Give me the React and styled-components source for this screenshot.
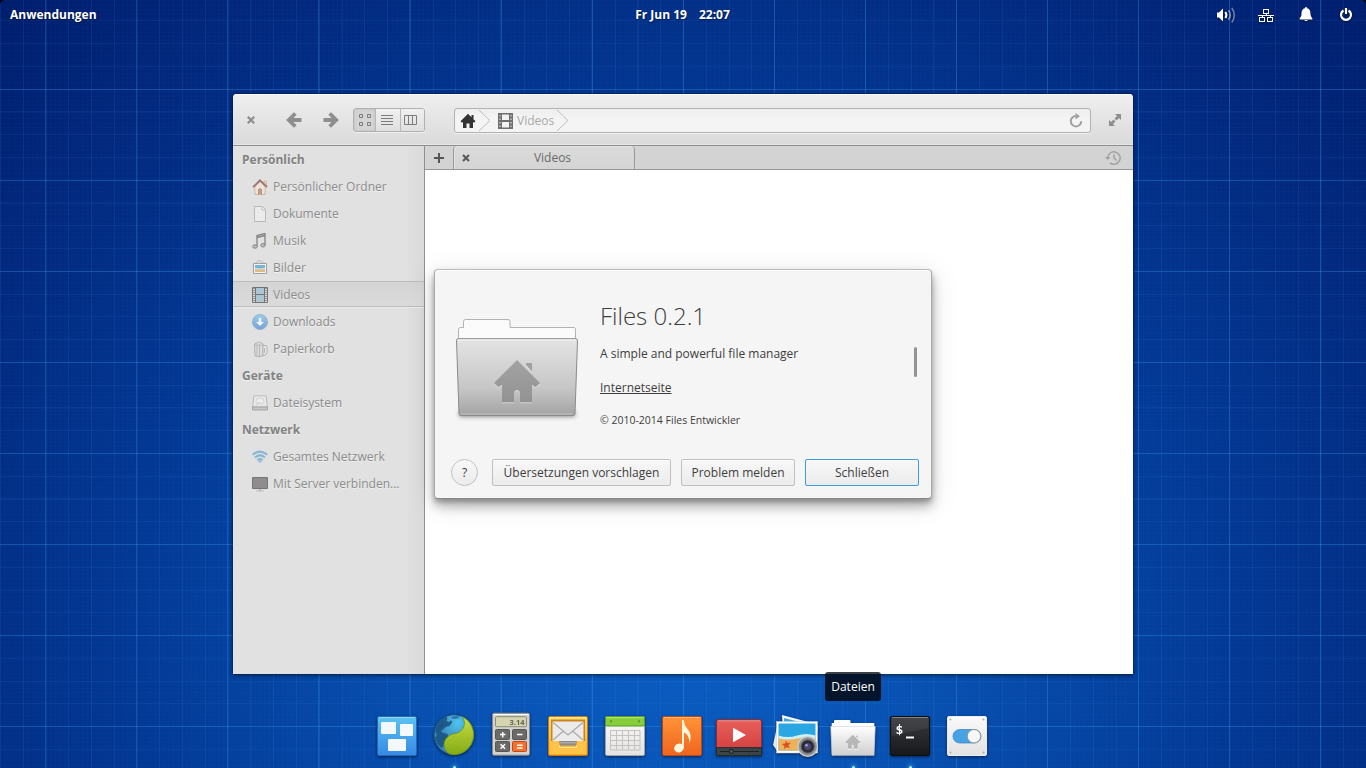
import React from "react";
import styled, { createGlobalStyle, css } from "styled-components";

const GlobalStyle = createGlobalStyle`
  *, *::before, *::after { box-sizing: border-box; }
  body { margin: 0; background: #000; overflow: hidden; }
  svg { display: block; flex: none; }
  button { font: inherit; color: inherit; margin: 0; }
`;

const minor = "rgba(60,150,235,0.1)";
const fine = "rgba(60,150,235,0.025)";
const major = "rgba(60,160,240,0.26)";

const Desktop = styled.main`
  position: relative;
  width: 1366px;
  height: 768px;
  overflow: hidden;
  border-radius: 5px 5px 0 0;
  display: flex;
  flex-direction: column;
  justify-content: space-between;
  font: 12px/18px "Open Sans", "Noto Sans", sans-serif;
  background:
    repeating-linear-gradient(90deg, transparent 0 45px, ${major} 45.3px 46.1px, transparent 46.4px 91.067px),
    repeating-linear-gradient(180deg, transparent 0 88.8px, ${major} 89px 89.8px, transparent 90px 91.067px),
    repeating-linear-gradient(90deg, ${minor} 0 1px, transparent 1.1px 22.767px),
    repeating-linear-gradient(180deg, transparent 0 20.3px, ${minor} 20.4px 21.4px, transparent 21.5px 22.767px),
    repeating-linear-gradient(90deg, ${fine} 0 1px, transparent 1px 4.553px),
    repeating-linear-gradient(180deg, ${fine} 0 1px, transparent 1px 4.553px),
    radial-gradient(ellipse 860px 800px at 683px 640px, #0a5cc2 0%, #0850b0 30%, #033a97 62%, #022a80 88%, #001a69 118%);
`;

const Panel = styled.header`
  display: grid;
  grid-template-columns: 1fr auto 1fr;
  align-items: center;
  height: 30px;
  padding: 0 10px;
  color: #fff;
  font-weight: 700;
  text-shadow: 0 1px 2px rgba(0, 0, 0, 0.6);
`;
const Clock = styled.div`
  display: flex;
  gap: 12px;
  margin-right: 1px;
`;
const Indicators = styled.div`
  display: flex;
  justify-content: flex-end;
  gap: 20px;
  filter: drop-shadow(0 1px 1px rgba(0, 0, 0, 0.5));
`;

const Window = styled.section`
  position: absolute;
  left: 233px;
  top: 94px;
  width: 900px;
  height: 580px;
  display: flex;
  flex-direction: column;
  overflow: hidden;
  border-radius: 4px 4px 0 0;
  background: #fff;
`;
const WindowShadow = styled.div`
  position: absolute;
  left: 233px;
  top: 94px;
  width: 900px;
  height: 580px;
  border-radius: 4px 4px 0 0;
  box-shadow: 0 0 0 1px rgba(0, 0, 0, 0.15), 0 1px 5px rgba(0, 0, 0, 0.55);
`;
const HeaderBar = styled.div`
  display: flex;
  align-items: center;
  height: 52px;
  padding: 0 10px;
  color: #8e8e8e;
  border-bottom: 1px solid #8f8f8f;
  background: linear-gradient(#efefef, #dadada);
  box-shadow: inset 0 1px #fafafa, inset 0 -1px #e6e6e6;
`;
const NavButtons = styled.div`
  display: flex;
  gap: 21px;
  margin: 0 14.5px 0 26.5px;
`;
const ViewSwitch = styled.div`
  display: flex;
  width: 72px;
  height: 24px;
  border: 1px solid #b0b0b0;
  border-radius: 3px;
  box-shadow: 0 1px rgba(255, 255, 255, 0.5);
  overflow: hidden;
`;
const ViewButton = styled.div`
  flex: 1;
  display: grid;
  place-items: center;
  color: #7c7c7c;
  background: ${(p) => (p.$active ? "#d4d4d4" : "linear-gradient(#f0f0f0, #dfdfdf)")};
  box-shadow: ${(p) => (p.$active ? "inset 0 0 3px #bbb" : "none")};
  & + & {
    border-left: 1px solid #b8b8b8;
    padding-right: 2px;
  }
`;
const PathBar = styled.div`
  flex: 1;
  display: flex;
  align-items: center;
  height: 25px;
  margin: 2px 16px 0 29px;
  padding: 0 6px 0 5px;
  color: #a8a8a8;
  border: 1px solid #b2b2b2;
  border-radius: 3px;
  background: linear-gradient(#ededed, #f4f4f4 40%);
  box-shadow: 0 1px rgba(255, 255, 255, 0.6);
`;
const Crumb = styled.span`
  flex: none;
  display: flex;
  align-items: center;
  gap: ${(p) => p.$gap}px;
  padding-left: ${(p) => p.$inset || 0}px;
`;
const Spacer = styled.span`
  flex: 1;
`;

const Content = styled.div`
  flex: 1;
  display: flex;
`;
const Sidebar = styled.nav`
  width: 192px;
  border-right: 1px solid #8f8f8f;
  color: #8b8b8b;
  text-shadow: 0 1px rgba(255, 255, 255, 0.5);
  background: linear-gradient(90deg, #e1e1e1 90%, #dadada);
`;
const rowBase = css`
  height: 27px;
  display: flex;
  align-items: center;
`;
const SideHeading = styled.div`
  ${rowBase}
  padding-left: 9px;
  font-weight: 700;
  color: #828282;
`;
const SideItem = styled.div`
  ${rowBase}
  gap: 5px;
  padding-left: 19px;
  ${(p) =>
    p.$selected &&
    css`
      height: 26px;
      margin-bottom: 1px;
      padding-top: 1px;
      border: solid #bdbdbd;
      border-width: 1px 0;
      background: linear-gradient(#d4d4d4, #dbdbdb);
      box-shadow: 0 1px #eaeaea;
    `}
  & svg { opacity: 0.6; }
`;
const Main = styled.div`
  flex: 1;
`;
const TabBar = styled.div`
  display: flex;
  align-items: center;
  height: 24px;
  color: #6a6a6a;
  background: #d3d3d3;
  border-bottom: 1px solid #979797;
  padding-right: 12px;
`;
const NewTab = styled.div`
  width: 28px;
  display: grid;
  place-items: center;
`;
const Tab = styled.div`
  display: flex;
  align-items: center;
  width: 182px;
  height: 23px;
  padding-left: 8px;
  border: solid #999;
  border-width: 0 1px;
  border-radius: 4px 4px 0 0;
  background: linear-gradient(#dadada, #d5d5d5);
  box-shadow: inset 1px 1px #e4e4e4;
`;
const TabTitle = styled.span`
  flex: 1;
  text-align: center;
  padding: 1px 0 0 1px;
`;

const Dialog = styled.section`
  position: absolute;
  left: 434px;
  top: 269px;
  width: 498px;
  height: 230px;
  display: flex;
  flex-direction: column;
  justify-content: space-between;
  padding: 0 12px 12px 16px;
  color: #3d3d3d;
  background: #f5f5f5;
  border: 1px solid #aaa;
  border-color: #bbb #aaa #888;
  border-radius: 4px;
  box-shadow: 0 7px 12px rgba(0, 0, 0, 0.3), 0 3px 4px rgba(0, 0, 0, 0.2), 0 5px 30px rgba(0, 0, 0, 0.1), inset 0 1px #fff;
`;
const AboutBody = styled.div`
  display: flex;
  padding: 34px 2px 0 2px;
`;
const AboutText = styled.div`
  flex: 1;
  display: flex;
  flex-direction: column;
  align-items: flex-start;
  padding: 0 0 0 19px;
`;
const AppName = styled.h1`
  margin: -4px 0 0;
  font-size: 24px;
  line-height: 32px;
  font-weight: 300;
`;
const Tagline = styled.p`
  margin: 13px 0 0;
`;
const Link = styled.a`
  margin-top: 16px;
  text-decoration: underline;
`;
const Copyright = styled.small`
  margin-top: 14px;
  font-size: 10.5px;
`;
const ScrollThumb = styled.div`
  width: 3px;
  height: 30px;
  margin-top: 43px;
  border-radius: 2px;
  background: #939393;
`;
const Actions = styled.div`
  display: flex;
  gap: 10px;
`;
const Button = styled.button`
  width: ${(p) => p.$width}px;
  height: 27px;
  padding: 0;
  white-space: nowrap;
  border: 1px solid ${(p) => (p.$primary ? "#3d9bda" : "#c0c0c0")};
  border-radius: ${(p) => (p.$round ? "50%" : "2px")};
  margin-right: ${(p) => (p.$round ? "4px" : "0")};
  background: linear-gradient(#f8f8f8, #ebebeb);
  box-shadow: inset 0 1px rgba(255, 255, 255, 0.7);
`;

const Dock = styled.footer`
  position: relative;
  z-index: 2;
  display: flex;
  padding-left: 369px;
`;
const DockItem = styled.div`
  position: relative;
  width: 57px;
  height: 60px;
  & > svg { filter: drop-shadow(0 1px 1.5px rgba(0, 0, 0, 0.55)); }
  ${(p) =>
    p.$running &&
    css`
      &::after {
        content: "";
        position: absolute;
        left: 27px;
        bottom: -1px;
        width: 3px;
        height: 3px;
        border-radius: 50%;
        background: #b5ecff;
        box-shadow: 0 0 4px 1px rgba(90, 200, 255, 0.65);
      }
    `}
`;
const Tooltip = styled.div`
  position: absolute;
  left: 0;
  top: -36px;
  width: 56px;
  height: 29px;
  line-height: 29px;
  text-align: center;
  color: #fff;
  border-radius: 3px;
  background: linear-gradient(#3c3f45 2px, #04142b 2px);
`;

const HOUSE = "M64 56 41 79l4.500 4.300 3.500-2.500v17.500h12V90q0-4 3-4t3 4v8.300h12V80.800l3.500 2.500L87 79Zm9 3h6v8.500l-6-6.500Z";

const Icon = ({ w = 16, h = 16, children, ...rest }) => (
  <svg width={w} height={h} viewBox={`0 0 ${w} ${h}`} fill="none" {...rest}>
    {children}
  </svg>
);

const VolumeIcon = () => (
  <Icon w={20}>
    <path d="M1 5.500h2l4-4v13l-4-4H1Z" fill="#fff" />
    <path d="M9.300 5q2.200 3 0 6" stroke="#fff" strokeWidth="2" />
    <path d="M12.500 3.200q3.400 4.800 0 9.600" stroke="#fff" strokeOpacity=".5" strokeWidth="1.700" />
    <path d="M15.800 1q5 7 0 14.500" stroke="#fff" strokeOpacity=".4" strokeWidth="1.700" />
  </Icon>
);
const NetworkIcon = () => (
  <Icon w={20}>
    <path d="M7.500 1.500h5v4h-5Zm-4 8h5v4h-5Zm8 0h5v4h-5ZM2 7.500h16M10 5.500v2M6 7.500v2M14 7.500v2" stroke="#fff" transform="translate(0 .5) scale(1 1)" shapeRendering="crispEdges" />
  </Icon>
);
const BellIcon = () => (
  <Icon w={20}>
    <path d="M10 0q1 0 1 1.200c3 .8 3.500 3 3.500 6 0 2 1 3 1.800 3.800v1.500H3.700V11c.8-.8 1.800-1.800 1.800-3.800 0-3 .5-5.200 3.500-6Q9 0 10 0ZM8 13h4q-2 2-4 0Z" fill="#fff" />
  </Icon>
);
const PowerIcon = () => (
  <Icon w={20}>
    <path d="M7.500 3.500a5 5 0 1 0 5 0M10 1v6" stroke="#fff" strokeWidth="2.200" />
  </Icon>
);
const CloseIcon = () => (
  <Icon>
    <path d="m4.800 4.800 6.400 6.400m0-6.400-6.400 6.400" stroke="currentColor" strokeWidth="2.200" />
  </Icon>
);
const ArrowIcon = ({ flip }) => (
  <Icon transform={flip ? "scale(-1 1)" : undefined}>
    <path d="M9.300 1.500 2.800 8l6.500 6.500M3 8h12.500" stroke="currentColor" strokeWidth="3.800" />
  </Icon>
);
const MaximizeIcon = () => (
  <Icon>
    <path d="M8 2h6v6l-2-2-2.500 2.500-2-2L10 4ZM8 14H2V8l2 2 2.500-2.500 2 2L6 12Z" fill="currentColor" />
    <path d="m6.500 6.500 3 3" stroke="#e3e3e3" strokeWidth=".9" />
  </Icon>
);
const ReloadIcon = () => (
  <Icon>
    <path d="M9 3H8a5.200 5.200 0 1 0 5.200 5.200" stroke="#a0a0a0" strokeWidth="2" />
    <path d="M7.500 0 12 3.200 7.500 6.500Z" fill="#a0a0a0" />
  </Icon>
);
const HistoryIcon = () => (
  <Icon>
    <path d="M2.700 8.500A6.200 6.200 0 1 1 5 12.900M9 4.500V8l2.500 2.500" stroke="#a2a2a2" strokeWidth="1.500" />
    <path d="M0 7h5.500L2.700 10Z" fill="#a2a2a2" />
  </Icon>
);
const Chevron = () => (
  <Icon w={14} h={23}>
    <path d="M1 1 12 11.500 1 22" stroke="#bdbdbd" />
  </Icon>
);

const SideIcons = {
  home: (
    <Icon>
      <path d="M12 2h2.500v5L12 5Z" fill="#e8c9a0" stroke="#b98a60" strokeWidth=".6" />
      <path d="M2.800 8 8 2.500 13.200 8v7.500H2.800Z" fill="#f7e6d8" stroke="#b08b78" strokeWidth=".8" />
      <path d="M1 8.200 8 1.300l7 6.900" stroke="#6b2f28" strokeWidth="1.700" />
      <path d="M6.500 15.500V10.500q1.500-2 3 0v5" fill="#b97840" stroke="#8b4d22" strokeWidth=".8" />
    </Icon>
  ),
  docs: (
    <Icon>
      <path d="M2.500.5h8l3 3v12h-11Z" fill="#f2f2f2" stroke="#a0a0a0" />
      <path d="M10 1v3h3" stroke="#b0b0b0" />
    </Icon>
  ),
  music: (
    <Icon>
      <path d="M5 13V2.500l8-2V12M5 4.500l8-2" stroke="#444" strokeWidth="1.300" />
      <ellipse cx="3" cy="13.500" rx="2.300" ry="1.700" stroke="#444" fill="#aaa" />
      <ellipse cx="11" cy="12.300" rx="2.200" ry="1.700" stroke="#444" fill="#aaa" />
    </Icon>
  ),
  pics: (
    <Icon>
      <path d="m1 5 6-4.500 7 3.500 1 9H2Z" fill="#ddd" stroke="#999" strokeWidth=".8" />
      <path d="M1.500 3.500h13v10h-13Z" fill="#fff" stroke="#777" />
      <path d="M3 5h10v4H3Z" fill="#2f9ad0" />
      <path d="M3 8.500q5 1 10 0V12H3Z" fill="#dfa244" />
      <path d="M3 8.500q5 1 10 0" stroke="#d8eef5" />
    </Icon>
  ),
  video: (
    <Icon>
      <path d="M.5.500h15v15H.5Z" fill="#e0e0e0" stroke="#333" />
      <path d="M3.500 1h9v14h-9Z" fill="#8fbad0" />
      <path d="M3.500 1v14M12.500 1v14M3.500 7.500h9" stroke="#333" />
      <path d="M2 1v14M14 1v14" stroke="#444" strokeWidth="1.500" strokeDasharray="1 1" />
    </Icon>
  ),
  down: (
    <Icon>
      <defs>
        <linearGradient id="downFill" x2="0" y2="1"><stop stopColor="#6fc4ee" /><stop offset="1" stopColor="#2f78cf" /></linearGradient>
      </defs>
      <circle cx="8" cy="8" r="7.500" fill="url(#downFill)" stroke="#5b93c4" />
      <path d="M6.700 4h2.600v4H12l-4 4-4-4h2.700Z" fill="#fff" />
    </Icon>
  ),
  trash: (
    <Icon>
      <path d="M2.500 3 7 1l4 2v12q-4 1-8 0Z" fill="#ddd" stroke="#888" strokeWidth=".9" />
      <path d="M5 4v11M7.500 4v11M3 4h8" stroke="#999" />
      <path d="M11 4.500q4-1 4 2v5q0 3-4 3Z" fill="#eee" stroke="#888" strokeWidth=".9" />
      <path d="M12.500 7v5" stroke="#999" />
    </Icon>
  ),
  disk: (
    <Icon>
      <path d="M2 .8h12l1.500 11.200H.5Z" fill="#eee" stroke="#999" strokeWidth=".9" />
      <path d="M.5 12h15v3H.5Z" fill="#b5b5b5" stroke="#777" strokeWidth=".9" />
      <ellipse cx="8" cy="6" rx="4" ry="3" fill="#f8f8f8" stroke="#bbb" strokeWidth=".8" />
      <path d="m4 10 4-3" stroke="#bbb" />
    </Icon>
  ),
  wifi: (
    <Icon>
      <path d="M.7 5.800q7.300-6.500 14.600 0M3 8.500q5-4.500 10 0M5.300 11.200q2.700-2.500 5.400 0" stroke="#4d9bcb" strokeWidth="2.200" />
      <path d="m6.200 12.200 1.800-1 1.800 1L8 14Z" fill="#4d9bcb" />
    </Icon>
  ),
  server: (
    <Icon>
      <path d="M.5 1.500h15v11H.5Z" fill="#5c5558" stroke="#2f2f2f" />
      <path d="M6.500 13h3v1.500H12v1H4v-1h2.500Z" fill="#aaa" />
    </Icon>
  ),
};

const SIDEBAR = [
  { heading: "Persönlich" },
  { icon: "home", label: "Persönlicher Ordner" },
  { icon: "docs", label: "Dokumente" },
  { icon: "music", label: "Musik" },
  { icon: "pics", label: "Bilder" },
  { icon: "video", label: "Videos", selected: true },
  { icon: "down", label: "Downloads" },
  { icon: "trash", label: "Papierkorb" },
  { heading: "Geräte" },
  { icon: "disk", label: "Dateisystem" },
  { heading: "Netzwerk" },
  { icon: "wifi", label: "Gesamtes Netzwerk" },
  { icon: "server", label: "Mit Server verbinden..." },
];

const Grad = ({ id, from, to }) => (
  <linearGradient id={id} x2="0" y2="1">
    <stop stopColor={from} />
    <stop offset="1" stopColor={to} />
  </linearGradient>
);

const HomeFolder = () => (
  <Icon w={128} h={128}>
    <defs>
      <linearGradient id="folderFront" x2="0" y2="1">
        <stop stopColor="#e4e4e4" />
        <stop offset=".65" stopColor="#c6c6c6" />
        <stop offset="1" stopColor="#a3a3a3" />
      </linearGradient>
      <Grad id="folderHouse" from="#a3a3a3" to="#929292" />
      <filter id="soft" x="-10%" y="-150%" width="120%" height="400%"><feGaussianBlur stdDeviation="2" /></filter>
    </defs>
    <path d="M6 107h116v6H6Z" fill="#000" opacity=".4" filter="url(#soft)" />
    <path d="M5.500 40V25.500q0-2 2-2h3v-6q0-2 2-2H55q2 0 2 2v6h64q1.500 0 1.500 2V40Z" fill="#fbfbfb" stroke="#b2b2b2" />
    <path d="M5 34.700h118q1.500 0 1.500 2L122 109.500q0 2-2 2H8q-2 0-2-2L3.500 36.700q0-2 1.500-2Z" fill="url(#folderFront)" stroke="#8b8b8b" />
    <path d="M5 36h118" stroke="#fff" opacity=".8" />
    <path d="M8 110h112" stroke="#d0d0d0" opacity=".7" />
    <path d={HOUSE} transform="translate(0 1)" fill="#fff" opacity=".45" />
    <path d={HOUSE} fill="url(#folderHouse)" />
  </Icon>
);

const Tile = ({ id, from, to, edge }) => (
  <>
    <defs><Grad id={id} from={from} to={to} /></defs>
    <rect x="8.500" y="8.500" width="39" height="39" rx="1.500" fill={`url(#${id})`} stroke={edge} />
    <path d="M10 9.500h36" stroke="#fff" opacity=".35" />
  </>
);

const DOCK = [
  {
    name: "Fenster",
    art: (
      <>
        <Tile id="t0" from="#5cc3f2" to="#3689e6" edge="#2468b8" />
        <g fill="#f3f8fc">
          <rect x="12" y="14" width="15" height="12" rx="1" />
          <rect x="31" y="16" width="13" height="12" rx="1" />
          <rect x="19" y="31" width="18" height="12" rx="1" />
        </g>
      </>
    ),
  },
  {
    name: "Browser",
    running: true,
    art: (
      <>
        <defs>
          <radialGradient id="sea" cx=".6" cy=".2"><stop stopColor="#4fc5f0" /><stop offset="1" stopColor="#3a86be" /></radialGradient>
          <Grad id="leaf" from="#c8dc45" to="#84ab14" />
        </defs>
        <circle cx="28" cy="26.700" r="20" fill="url(#sea)" stroke="#1d4d7c" />
        <path d="M10.500 18q3.500-6 9-9.500l2 1.500-1 3 3 1 1-2 2 2-3 4-4 1-3 3-2 1 3 2 4 1 1 3-4 4-1 5-2 2q-5-4-6.500-10l2-3-2-4Z" fill="#17507f" opacity=".85" />
        <path d="M25 9q5-2 9 0l-4 2-4-.5Zm-12 9 4-3 1 2-3 3Z" fill="#17507f" opacity=".6" />
        <path d="M36 8.500C40.500 14 39 22 30.700 25.300 22 26 15 33 19.500 42q2.500 4.700 8.500 4.700A20 20 0 0 0 36 8.500Z" fill="url(#leaf)" stroke="#6c9410" strokeWidth=".8" />
      </>
    ),
  },
  {
    name: "Rechner",
    art: (
      <>
        <rect x="9.500" y="5.200" width="37" height="42" rx="1.500" fill="#d2d2d2" stroke="#8a8a8a" />
        <path d="M10.500 6.500h35" stroke="#fff" />
        <rect x="12.500" y="8.700" width="31" height="10" rx="1" fill="#d6d5b2" stroke="#8d8c75" />
        <text x="41.500" y="16.500" textAnchor="end" fontSize="7.500" fontWeight="700" fill="#66655a" fontFamily="Open Sans, sans-serif">3.14</text>
        <rect x="12.500" y="21.500" width="14" height="10" rx="1" fill="#6b6a67" stroke="#555" />
        <rect x="29.500" y="21.500" width="14" height="10" rx="1" fill="#6b6a67" stroke="#555" />
        <rect x="12.500" y="33.500" width="14" height="10" rx="1" fill="#6b6a67" stroke="#555" />
        <rect x="29.500" y="33.500" width="14" height="10" rx="1" fill="#f5712c" stroke="#c2481a" />
        <path d="M17 26.500h5.500M19.700 24v5.500M34 26.500h5.500M17.500 36.300l4.500 4.500m0-4.500-4.500 4.500M34 37.200h5.500M34 40h5.500" stroke="#fff" strokeWidth="1.500" />
      </>
    ),
  },
  {
    name: "Mail",
    art: (
      <>
        <Tile id="t3" from="#ffdf72" to="#f5a623" edge="#c77b10" />
        <path d="M11 11.500h34v22H11Z" fill="#c98320" />
        <path d="M12.500 13.500h31v19.500h-31Z" fill="#ebebeb" />
        <path d="M13 14.500 28 27 43 14.500M13 32l10.500-9M43 32l-10.500-9" stroke="#aaa" strokeWidth="1.200" />
        <path d="M10 33h9v4q0 1.500 2 1.500h14q2 0 2-1.500v-4h9v13H10Z" fill="#ffc348" />
        <path d="M19.500 33h17v4.500h-17Z" fill="#8b8b8b" />
        <path d="M20 34.800h16" stroke="#bbb" />
        <path d="M19.500 37v2.500h17V37" stroke="#ffe28b" />
      </>
    ),
  },
  {
    name: "Kalender",
    art: (
      <>
        <Tile id="t4" from="#fafafa" to="#e3e3e3" edge="#a5a5a5" />
        <path d="M8.500 18V9.500q0-1 1-1h37q1 0 1 1V18Z" fill="#86cc3b" stroke="#5a9a25" />
        <path d="M9.500 9.700h37" stroke="#b5ea72" />
        <path d="M14 12v2.500M42 12v2.500" stroke="#5e9a2b" strokeWidth="1.700" />
        <path d="M13.500 22.500h29.500v19.500h-29.500Zm0 5h29.500m-29.500 5h29.500m-29.500 5h29.500M19.500 22.500V42m6-19.500V42m6-19.500V42m6-19.500V42" stroke="#c6c2bb" />
      </>
    ),
  },
  {
    name: "Musik",
    art: (
      <>
        <Tile id="t5" from="#ff9436" to="#f0641f" edge="#b84a14" />
        <ellipse cx="25" cy="40" rx="5" ry="4.300" transform="rotate(-25 25 40)" fill="#fff4dc" />
        <path d="M28 12h1.700q.3 5 3.500 8.500 5.500 6 2.300 14.500 0-8-5.500-10.500V40h-2Z" fill="#fff4dc" />
      </>
    ),
  },
  {
    name: "Videos",
    art: (
      <>
        <defs><Grad id="t6" from="#e8605a" to="#d03b3b" /></defs>
        <rect x="5.500" y="11.800" width="45" height="35.700" rx="1.500" fill="url(#t6)" stroke="#96292b" />
        <path d="M7 12.800h42" stroke="#fff" opacity=".4" />
        <path d="m22 19.700 13 7.300-13 7.300Z" fill="#fff" />
        <path d="M5.500 39.700h45v7.800h-45Z" fill="#3b4447" stroke="#23292b" />
        <path d="M9 43.500h39" stroke="#1e2325" strokeWidth="1.200" />
        <circle cx="20.300" cy="43.500" r="2" fill="#525c60" stroke="#171b1d" />
      </>
    ),
  },
  {
    name: "Fotos",
    art: (
      <>
        <path d="m14 7 34 9-2 26-30-6Z" fill="#f7f7f7" />
        <path d="m16 10 24 6-24-1Z" fill="#38a9dc" />
        <path d="m9 19 37-2 4 2-4 24-36 1-5-7Z" fill="#e8e8e8" />
        <rect x="8.500" y="13.500" width="41" height="31.500" fill="#fff" stroke="#c9c9c9" strokeWidth=".5" />
        <rect x="10.500" y="15.500" width="37" height="27" fill="#2aa6e2" />
        <path d="M10.500 29q9.500 3 18.500 0t18.500 0v13.500h-37Z" fill="#e9b25b" />
        <path d="M10.500 27.500q9.500 3 18.500 0t18.500 0v3q-9-2-18 0t-19 0Z" fill="#cdeefa" />
        <path d="m18 32.500 1.300 2.500 3.700-.5-2.700 2.700 1.700 3-3.200-1.200-2.800 2.200.5-3.200-2.700-2 3.400-.5Z" fill="#e04a26" />
        <circle cx="39.700" cy="38.500" r="9.800" fill="#8d9096" stroke="#d0d0d0" strokeWidth="1.300" />
        <circle cx="39.700" cy="38.500" r="6.500" fill="#2a2a32" stroke="#555" />
        <circle cx="39.700" cy="38.500" r="3.500" fill="#4b4673" />
        <circle cx="38.500" cy="37.200" r="1.200" fill="#a6b0de" />
      </>
    ),
  },
  {
    name: "Dateien",
    running: true,
    tooltip: true,
    art: (
      <>
        <defs><Grad id="t8" from="#ffffff" to="#cfcfcf" /></defs>
        <path d="M6.700 20v-5H9v-2q0-1 1-1h14.500q1 0 1 1v2h23.800v5Z" fill="#fff" />
        <path d="M5.800 18.500h44.400L49 47.300H7Z" fill="url(#t8)" stroke="#d5d5d5" strokeWidth=".7" />
        <path d={HOUSE} transform="translate(6.500 8.800) scale(.333)" fill="#fff" />
        <path d={HOUSE} transform="translate(6.500 8) scale(.333)" fill="#b7b7b7" />
      </>
    ),
  },
  {
    name: "Terminal",
    running: true,
    art: (
      <>
        <Tile id="t9" from="#393b40" to="#17181b" edge="#0d0e10" />
        <path d="M9.500 28V9.500h37V20Z" fill="#fff" opacity=".06" />
        <text x="13.500" y="26" fontSize="13" fontWeight="700" fill="#fff" fontFamily="DejaVu Sans Mono, monospace">$</text>
        <path d="M24 29.500h8" stroke="#fff" strokeWidth="2" />
      </>
    ),
  },
  {
    name: "Einstellungen",
    art: (
      <>
        <Tile id="t10" from="#fafafa" to="#e2e2e2" edge="#ececec" />
        <g fill="#aaa"><circle cx="11.500" cy="11.500" r="1" /><circle cx="44.500" cy="11.500" r="1" /><circle cx="11.500" cy="44.500" r="1" /><circle cx="44.500" cy="44.500" r="1" /></g>
        <rect x="14" y="21.500" width="28" height="13.500" rx="6.700" fill="#47a3e6" stroke="#3382bf" strokeWidth=".7" />
        <circle cx="35" cy="28.200" r="6.700" fill="#f7f7f7" stroke="#898989" strokeWidth=".8" />
      </>
    ),
  },
];

export default function App() {
  return (
    <>
      <GlobalStyle />
      <Desktop>
        <Panel>
          <span>Anwendungen</span>
          <Clock><span>Fr Jun 19</span><span>22:07</span></Clock>
          <Indicators><VolumeIcon /><NetworkIcon /><BellIcon /><PowerIcon /></Indicators>
        </Panel>

        <Dock>
          {DOCK.map((d) => (
            <DockItem key={d.name} $running={d.running}>
              <Icon w={57} h={60} aria-label={d.name}>{d.art}</Icon>
              {d.tooltip && <Tooltip>{d.name}</Tooltip>}
            </DockItem>
          ))}
        </Dock>

        <WindowShadow />
        <Window>
          <HeaderBar>
            <CloseIcon />
            <NavButtons><ArrowIcon /><ArrowIcon flip /></NavButtons>
            <ViewSwitch>
              <ViewButton $active>
                <Icon><path d="M2.500 2.500h3v3h-3Zm8 0h3v3h-3Zm-8 8h3v3h-3Zm8 0h3v3h-3Z" stroke="currentColor" /></Icon>
              </ViewButton>
              <ViewButton>
                <Icon><path d="M2 3.500h12M2 6.500h12M2 9.500h12M2 12.500h12" stroke="currentColor" /></Icon>
              </ViewButton>
              <ViewButton>
                <Icon><path d="M1.500 3.500h12v9h-12Zm4 0v9m4-9v9" stroke="currentColor" /></Icon>
              </ViewButton>
            </ViewSwitch>
            <PathBar>
              <Crumb $gap={2}>
                <Icon>
                  <path d="M8 .8 .5 8.300 2 9.800l1-.7V15h3.500v-4.500h3V15H13V9.100l1 .7 1.500-1.500-2-2V2h-2v2.300Z" fill="#333" />
                </Icon>
                <Chevron />
              </Crumb>
              <Crumb $gap={4} $inset={6}>
                <Icon w={15}>
                  <path fillRule="evenodd" d="M0 0h15v16H0Zm4 1.500V7h7V1.500ZM4 9v5.500h7V9ZM1.500 2v1.500h1V2Zm0 3.500V7h1V5.500Zm0 3.500v1.500h1V9Zm0 3.500V14h1v-1.500ZM12.500 2v1.500h1V2Zm0 3.500V7h1V5.500Zm0 3.500v1.500h1V9Zm0 3.500V14h1v-1.500Z" fill="#707070" />
                </Icon>
                <span>Videos</span>
              </Crumb>
              <Crumb $inset={2}><Chevron /></Crumb>
              <Spacer />
              <ReloadIcon />
            </PathBar>
            <MaximizeIcon />
          </HeaderBar>
          <Content>
            <Sidebar>
              {SIDEBAR.map((r) =>
                r.heading ? (
                  <SideHeading key={r.heading}>{r.heading}</SideHeading>
                ) : (
                  <SideItem key={r.label} $selected={r.selected}>
                    {SideIcons[r.icon]}
                    <span>{r.label}</span>
                  </SideItem>
                )
              )}
            </Sidebar>
            <Main>
              <TabBar>
                <NewTab>
                  <Icon><path d="M8 3v10M3 8h10" stroke="#555" strokeWidth="2" /></Icon>
                </NewTab>
                <Tab>
                  <Icon w={8}><path d="m1 5 6 6m0-6-6 6" stroke="#5c5c5c" strokeWidth="2.200" /></Icon>
                  <TabTitle>Videos</TabTitle>
                </Tab>
                <Spacer />
                <HistoryIcon />
              </TabBar>
            </Main>
          </Content>
        </Window>

        <Dialog role="dialog">
          <AboutBody>
            <HomeFolder />
            <AboutText>
              <AppName>Files 0.2.1</AppName>
              <Tagline>A simple and powerful file manager</Tagline>
              <Link>Internetseite</Link>
              <Copyright>© 2010-2014 Files Entwickler</Copyright>
            </AboutText>
            <ScrollThumb />
          </AboutBody>
          <Actions>
            <Button $round $width={27}>?</Button>
            <Button $width={179}>Übersetzungen vorschlagen</Button>
            <Button $width={114}>Problem melden</Button>
            <Button $primary $width={114}>Schließen</Button>
          </Actions>
        </Dialog>
      </Desktop>
    </>
  );
}
